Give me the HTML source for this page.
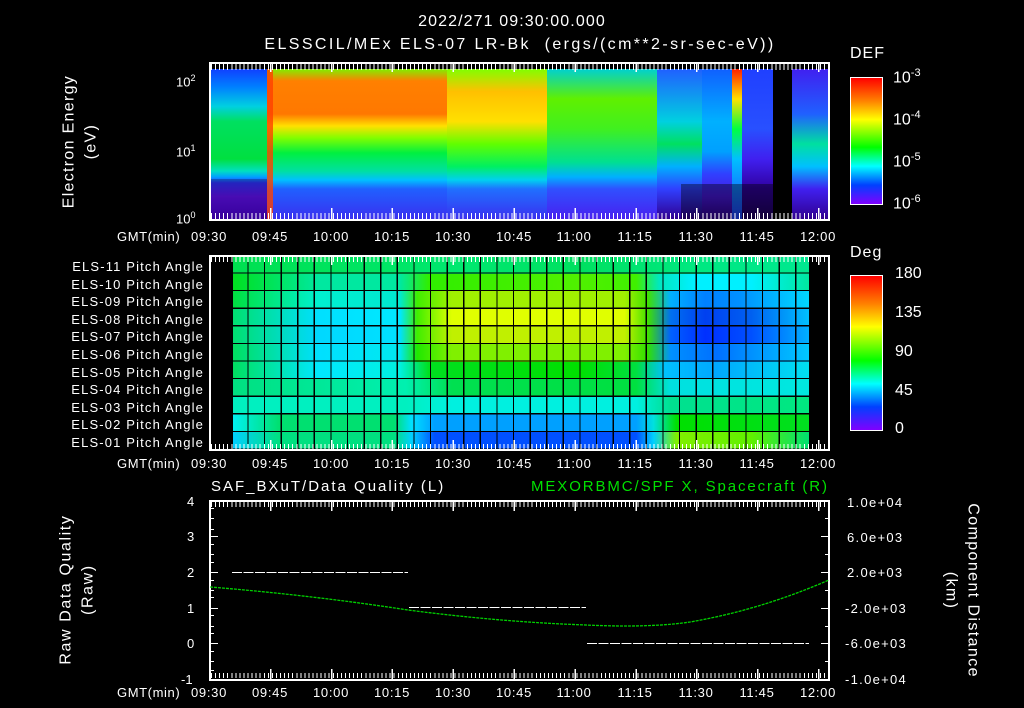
<!DOCTYPE html>
<html><head><meta charset="utf-8"><style>
body{margin:0;background:#000;width:1024px;height:708px;overflow:hidden;position:relative;font-family:"Liberation Sans",sans-serif;color:#fff}
.a{position:absolute}
.t{position:absolute;font-size:13px;white-space:nowrap;line-height:1}
.tl{position:absolute;font-size:13px;white-space:nowrap;line-height:1;width:60px;margin-left:-30px;text-align:center;letter-spacing:0.7px}
.box{position:absolute;border:2px solid #fff;box-sizing:border-box}
.ticks{position:absolute;height:6px;background:repeating-linear-gradient(90deg,#fff 0 1px,transparent 1px 4.06px)}
.maj{position:absolute;height:11px;background:repeating-linear-gradient(90deg,#fff 0 1.5px,transparent 1.5px 60.9px)}
.cb{position:absolute;border:1px solid #fff;background:linear-gradient(#ff0000,#ff8000 18%,#ffff00 33%,#00ff00 55%,#00ffff 70%,#0040ff 85%,#8000ff)}
.rot{position:absolute;transform:rotate(-90deg);transform-origin:center;text-align:center;font-size:16px;line-height:1.35;white-space:nowrap}
.row{position:absolute;left:233px;width:576px;height:17.6px}
.r{position:absolute;left:847px;font-size:13px;letter-spacing:1.3px;white-space:nowrap;line-height:1}
</style></head><body>

<div class="t" style="left:0;width:1024px;text-align:center;top:14px;font-size:16px;letter-spacing:1.1px">2022/271 09:30:00.000</div>
<div class="t" style="left:0;width:1040px;text-align:center;top:37px;font-size:16px;letter-spacing:2.4px">ELSSCIL/MEx ELS-07 LR-Bk &nbsp;(ergs/(cm**2-sr-sec-eV))</div>

<svg class="a" style="left:211px;top:69px" width="617" height="150">
<defs>
<linearGradient id="g1" x1="0" y1="0" x2="0" y2="1"><stop offset="0" stop-color="#1040ff"/><stop offset=".12" stop-color="#0080ff"/><stop offset=".25" stop-color="#00d0e0"/><stop offset=".35" stop-color="#00e060"/><stop offset=".6" stop-color="#00e040"/><stop offset=".68" stop-color="#00e0c0"/><stop offset=".72" stop-color="#00a0ff"/><stop offset=".76" stop-color="#3030ff"/><stop offset=".85" stop-color="#6010f0"/><stop offset="1" stop-color="#4a00d0"/></linearGradient>
<linearGradient id="g2" x1="0" y1="0" x2="0" y2="1"><stop offset="0" stop-color="#80f000"/><stop offset=".08" stop-color="#ff8000"/><stop offset=".3" stop-color="#ff7800"/><stop offset=".38" stop-color="#ffe000"/><stop offset=".46" stop-color="#80ff00"/><stop offset=".56" stop-color="#00f040"/><stop offset=".68" stop-color="#00e0a0"/><stop offset=".74" stop-color="#00c0ff"/><stop offset=".8" stop-color="#2060ff"/><stop offset="1" stop-color="#3a30f0"/></linearGradient>
<linearGradient id="g3" x1="0" y1="0" x2="0" y2="1"><stop offset="0" stop-color="#80ff00"/><stop offset=".15" stop-color="#ffc000"/><stop offset=".35" stop-color="#ffe000"/><stop offset=".5" stop-color="#60ff00"/><stop offset=".65" stop-color="#00f060"/><stop offset=".74" stop-color="#00d0f0"/><stop offset=".8" stop-color="#2070ff"/><stop offset="1" stop-color="#3a30f0"/></linearGradient>
<linearGradient id="g4" x1="0" y1="0" x2="0" y2="1"><stop offset="0" stop-color="#00d0d0"/><stop offset=".2" stop-color="#60f000"/><stop offset=".4" stop-color="#40f020"/><stop offset=".62" stop-color="#00e090"/><stop offset=".72" stop-color="#00b0ff"/><stop offset=".8" stop-color="#3050ff"/><stop offset="1" stop-color="#4820f0"/></linearGradient>
<linearGradient id="g5" x1="0" y1="0" x2="0" y2="1"><stop offset="0" stop-color="#1060ff"/><stop offset=".35" stop-color="#00b0ff"/><stop offset=".55" stop-color="#00a0ff"/><stop offset=".7" stop-color="#3040ff"/><stop offset=".85" stop-color="#4818e0"/><stop offset="1" stop-color="#300090"/></linearGradient>
<linearGradient id="g6" x1="0" y1="0" x2="0" y2="1"><stop offset="0" stop-color="#2040ff"/><stop offset=".4" stop-color="#2850ff"/><stop offset=".6" stop-color="#4020f0"/><stop offset=".8" stop-color="#3000a0"/><stop offset="1" stop-color="#200060"/></linearGradient>
<linearGradient id="g7" x1="0" y1="0" x2="0" y2="1"><stop offset="0" stop-color="#ff2000"/><stop offset=".2" stop-color="#ffe000"/><stop offset=".4" stop-color="#00ff40"/><stop offset=".6" stop-color="#00c0ff"/><stop offset="1" stop-color="#2040ff"/></linearGradient>
<linearGradient id="g8" x1="0" y1="0" x2="0" y2="1"><stop offset="0" stop-color="#4020f0"/><stop offset=".3" stop-color="#2060ff"/><stop offset=".5" stop-color="#00e0a0"/><stop offset=".65" stop-color="#00c0ff"/><stop offset=".8" stop-color="#4020f0"/><stop offset="1" stop-color="#300090"/></linearGradient>
<linearGradient id="g9" x1="0" y1="0" x2="0" y2="1"><stop offset="0" stop-color="#2060ff"/><stop offset=".35" stop-color="#00d0e0"/><stop offset=".5" stop-color="#00e060"/><stop offset=".65" stop-color="#00b0ff"/><stop offset=".8" stop-color="#3040ff"/><stop offset="1" stop-color="#300090"/></linearGradient>
</defs>
<rect x="0" y="0" width="56" height="150" fill="url(#g1)"/>
<rect x="56" y="0" width="180" height="150" fill="url(#g2)"/>
<rect x="236" y="0" width="100" height="150" fill="url(#g3)"/>
<rect x="336" y="0" width="110" height="150" fill="url(#g4)"/>
<rect x="446" y="0" width="45" height="150" fill="url(#g9)"/>
<rect x="491" y="0" width="30" height="150" fill="url(#g5)"/>
<rect x="521" y="0" width="41" height="150" fill="url(#g6)"/>
<rect x="521" y="0" width="10" height="150" fill="url(#g7)"/>
<rect x="562" y="0" width="19" height="150" fill="#000"/>
<rect x="581" y="0" width="36" height="150" fill="url(#g8)"/>
<rect x="56" y="0" width="6" height="150" fill="#ff4000" opacity=".8"/>
<rect x="0" y="110" width="56" height="40" fill="#000" opacity=".25"/>
<rect x="470" y="115" width="92" height="35" fill="#000" opacity=".4"/>
</svg>
<div class="box" style="left:209px;top:62px;width:621px;height:159px"></div>
<div class="ticks" style="left:211px;top:64px;width:617px"></div>
<div class="ticks" style="left:211px;top:213px;width:617px"></div>
<div class="maj" style="left:209px;top:64px;width:619px;height:8px"></div>
<div class="maj" style="left:209px;top:208px;width:619px"></div>
<div class="t" style="left:176px;top:74px">10<sup style="font-size:9px">2</sup></div>
<div class="t" style="left:176px;top:144px">10<sup style="font-size:9px">1</sup></div>
<div class="t" style="left:176px;top:211px">10<sup style="font-size:9px">0</sup></div>
<div class="rot" style="left:-5px;top:120px;width:170px;letter-spacing:1.3px">Electron Energy<br>(eV)</div>

<div class="t" style="left:850px;top:46px;font-size:16px;letter-spacing:1px">DEF</div>
<div class="cb" style="left:850px;top:77px;width:31px;height:126px"></div>
<div class="t" style="left:893px;top:68px;font-size:16px">10<sup style="font-size:11px">-3</sup></div>
<div class="t" style="left:893px;top:110px;font-size:16px">10<sup style="font-size:11px">-4</sup></div>
<div class="t" style="left:893px;top:152px;font-size:16px">10<sup style="font-size:11px">-5</sup></div>
<div class="t" style="left:893px;top:194px;font-size:16px">10<sup style="font-size:11px">-6</sup></div>

<div class="t" style="left:117px;top:230px;letter-spacing:0.6px">GMT(min)</div>
<div class="tl" style="left:209px;top:230px">09:30</div><div class="tl" style="left:270px;top:230px">09:45</div><div class="tl" style="left:331px;top:230px">10:00</div><div class="tl" style="left:392px;top:230px">10:15</div><div class="tl" style="left:453px;top:230px">10:30</div><div class="tl" style="left:514px;top:230px">10:45</div><div class="tl" style="left:574px;top:230px">11:00</div><div class="tl" style="left:635px;top:230px">11:15</div><div class="tl" style="left:696px;top:230px">11:30</div><div class="tl" style="left:757px;top:230px">11:45</div><div class="tl" style="left:818px;top:230px">12:00</div>

<div class="row" style="top:256px;background:linear-gradient(90deg,#00e050,#00e870 40%,#00e060 60%,#00e880 80%,#00e890)"></div>
<div class="row" style="top:273.6px;background:linear-gradient(90deg,#00e020,#00e8a0 15%,#00e8a0 29%,#30ee00 34%,#50f000 60%,#40f000 70%,#00e8c0 74%,#00f0ff 80%,#00f0ff 90%,#00e8a0)"></div>
<div class="row" style="top:291.2px;background:linear-gradient(90deg,#00e040,#00f0d0 15%,#00e8d0 29%,#40ee00 32%,#a0f000 38%,#a0f000 68%,#40e000 72%,#00b0ff 76%,#0080ff 82%,#0090ff 88%,#00d8ff)"></div>
<div class="row" style="top:308.8px;background:linear-gradient(90deg,#00e070,#00e0ff 15%,#00e8ff 29%,#40ee00 32%,#e0ff00 38%,#e0ff00 68%,#40e000 72%,#0070f0 76%,#0040f0 82%,#0060f0 90%,#00c0ff)"></div>
<div class="row" style="top:326.4px;background:linear-gradient(90deg,#00e070,#00d8ff 15%,#00e0ff 29%,#40ee00 32%,#c0f000 38%,#c0f000 68%,#40e000 72%,#0060ff 76%,#0030ff 82%,#0050ff 90%,#00b0ff)"></div>
<div class="row" style="top:344px;background:linear-gradient(90deg,#00e060,#00e0ff 15%,#00e8f0 29%,#20e800 32%,#80f000 38%,#80f000 68%,#30e000 72%,#0090ff 76%,#0070ff 84%,#00c8ff)"></div>
<div class="row" style="top:361.6px;background:linear-gradient(90deg,#00e060,#00e8ff 15%,#00f0e0 29%,#00e020 34%,#00e000 60%,#00e040 70%,#00c0ff 75%,#00a8ff 84%,#00e0f0)"></div>
<div class="row" style="top:379.2px;background:linear-gradient(90deg,#00e080,#00f0b0 30%,#00e050 38%,#00e040 70%,#00e0e0 76%,#00e8e0)"></div>
<div class="row" style="top:396.8px;background:linear-gradient(90deg,#00f0c0,#00f0c0 30%,#00f0e0 38%,#00f0e0 70%,#00e090 76%,#00e880)"></div>
<div class="row" style="top:414.4px;background:linear-gradient(90deg,#00f0f0,#00e070 8%,#00e070 28%,#00e0ff 31%,#00a0ff 35%,#00a0ff 70%,#00e0e0 73%,#00e000 77%,#00e020)"></div>
<div class="row" style="top:432px;height:17px;background:linear-gradient(90deg,#00d0ff,#00e080 8%,#00e080 28%,#00d0ff 31%,#0050ff 35%,#0050ff 70%,#00d0ff 73%,#80f000 77%,#60f000 90%,#00e070)"></div>
<div class="a" style="left:233px;top:256px;width:576px;height:193px;background:repeating-linear-gradient(90deg,transparent 0 15.3px,#000 15.3px 16.6px) -1px 0,repeating-linear-gradient(180deg,transparent 0 16.4px,#000 16.4px 17.6px)"></div>
<div class="box" style="left:209px;top:255px;width:621px;height:196px"></div>
<div class="ticks" style="left:211px;top:257px;width:617px;height:5px"></div>
<div class="ticks" style="left:211px;top:444px;width:617px;height:5px"></div>
<div class="maj" style="left:209px;top:257px;width:619px;height:8px"></div>
<div class="maj" style="left:209px;top:440px;width:619px;height:9px"></div>
<div class="a" style="right:820px;top:258px;text-align:right;font-size:13px;line-height:17.6px;white-space:nowrap;letter-spacing:1.15px">ELS-11 Pitch Angle<br>ELS-10 Pitch Angle<br>ELS-09 Pitch Angle<br>ELS-08 Pitch Angle<br>ELS-07 Pitch Angle<br>ELS-06 Pitch Angle<br>ELS-05 Pitch Angle<br>ELS-04 Pitch Angle<br>ELS-03 Pitch Angle<br>ELS-02 Pitch Angle<br>ELS-01 Pitch Angle</div>

<div class="t" style="left:850px;top:245px;font-size:16px;letter-spacing:1px">Deg</div>
<div class="cb" style="left:850px;top:275px;width:31px;height:154px"></div>
<div class="t" style="left:895px;top:266px;font-size:16px">180</div>
<div class="t" style="left:895px;top:305px;font-size:16px">135</div>
<div class="t" style="left:895px;top:344px;font-size:16px">90</div>
<div class="t" style="left:895px;top:383px;font-size:16px">45</div>
<div class="t" style="left:895px;top:421px;font-size:16px">0</div>

<div class="t" style="left:117px;top:457px;letter-spacing:0.6px">GMT(min)</div>
<div class="tl" style="left:209px;top:457px">09:30</div><div class="tl" style="left:270px;top:457px">09:45</div><div class="tl" style="left:331px;top:457px">10:00</div><div class="tl" style="left:392px;top:457px">10:15</div><div class="tl" style="left:453px;top:457px">10:30</div><div class="tl" style="left:514px;top:457px">10:45</div><div class="tl" style="left:574px;top:457px">11:00</div><div class="tl" style="left:635px;top:457px">11:15</div><div class="tl" style="left:696px;top:457px">11:30</div><div class="tl" style="left:757px;top:457px">11:45</div><div class="tl" style="left:818px;top:457px">12:00</div>

<div class="t" style="left:211px;top:479px;font-size:15px;letter-spacing:2px">SAF_BXuT/Data Quality (L)</div>
<div class="t" style="left:531px;top:479px;font-size:15px;color:#00e000;letter-spacing:1.9px">MEXORBMC/SPF X, Spacecraft (R)</div>
<svg class="a" style="left:0;top:0" width="1024" height="708">
<rect x="210" y="501" width="619" height="179" fill="none" stroke="#fff" stroke-width="2"/>
<line x1="232" y1="572.5" x2="408" y2="572.5" stroke="#fff" stroke-dasharray="10,1.5"/>
<line x1="409" y1="607.5" x2="586" y2="607.5" stroke="#fff" stroke-dasharray="10,1.5"/>
<line x1="587" y1="643.5" x2="809" y2="643.5" stroke="#fff" stroke-dasharray="10,1.5"/>
<path d="M210 587 Q310 595 408 610 Q500 622 586 625 Q650 628 690 622 Q760 610 829 580" fill="none" stroke="#00d000" stroke-width="1.3" stroke-dasharray="3,1"/>
<g stroke="#fff" stroke-width="1">
<path d="M210 536.5h8M210 572.5h8M210 608.5h8M210 643.5h8M210 518.5h4M210 554.5h4M210 590.5h4M210 626.5h4M210 661.5h4M210 508.5h4M210 529.5h4M210 544.5h4M210 562.5h4M210 580.5h4M210 597.5h4M210 615.5h4M210 633.5h4M210 651.5h4M210 670.5h4"/>
<path d="M829 536.5h-8M829 572.5h-8M829 608.5h-8M829 643.5h-8M829 518.5h-4M829 554.5h-4M829 590.5h-4M829 626.5h-4M829 661.5h-4"/>
</g>
</svg>
<div class="ticks" style="left:211px;top:502px;width:617px;height:5px"></div>
<div class="ticks" style="left:211px;top:673px;width:617px;height:5px"></div>
<div class="maj" style="left:209px;top:502px;width:619px;height:9px"></div>
<div class="maj" style="left:209px;top:669px;width:619px"></div>
<div class="t" style="left:187px;top:495px">4</div>
<div class="t" style="left:187px;top:530px">3</div>
<div class="t" style="left:187px;top:566px">2</div>
<div class="t" style="left:187px;top:602px">1</div>
<div class="t" style="left:187px;top:637px">0</div>
<div class="t" style="left:181px;top:673px">-1</div>
<div class="rot" style="left:-8px;top:568px;width:170px;letter-spacing:1.6px">Raw Data Quality<br>(Raw)</div>
<div class="r" style="top:496px">1.0e+04</div>
<div class="r" style="top:531px">6.0e+03</div>
<div class="r" style="top:566px">2.0e+03</div>
<div class="r" style="top:602px;left:845px">-2.0e+03</div>
<div class="r" style="top:637px;left:845px">-6.0e+03</div>
<div class="r" style="top:673px;left:845px">-1.0e+04</div>
<div class="rot" style="left:872px;top:569px;width:180px;transform:rotate(90deg);letter-spacing:1.4px">Component Distance<br>(km)</div>

<div class="t" style="left:117px;top:686px;letter-spacing:0.6px">GMT(min)</div>
<div class="tl" style="left:209px;top:686px">09:30</div><div class="tl" style="left:270px;top:686px">09:45</div><div class="tl" style="left:331px;top:686px">10:00</div><div class="tl" style="left:392px;top:686px">10:15</div><div class="tl" style="left:453px;top:686px">10:30</div><div class="tl" style="left:514px;top:686px">10:45</div><div class="tl" style="left:574px;top:686px">11:00</div><div class="tl" style="left:635px;top:686px">11:15</div><div class="tl" style="left:696px;top:686px">11:30</div><div class="tl" style="left:757px;top:686px">11:45</div><div class="tl" style="left:818px;top:686px">12:00</div>
</body></html>
